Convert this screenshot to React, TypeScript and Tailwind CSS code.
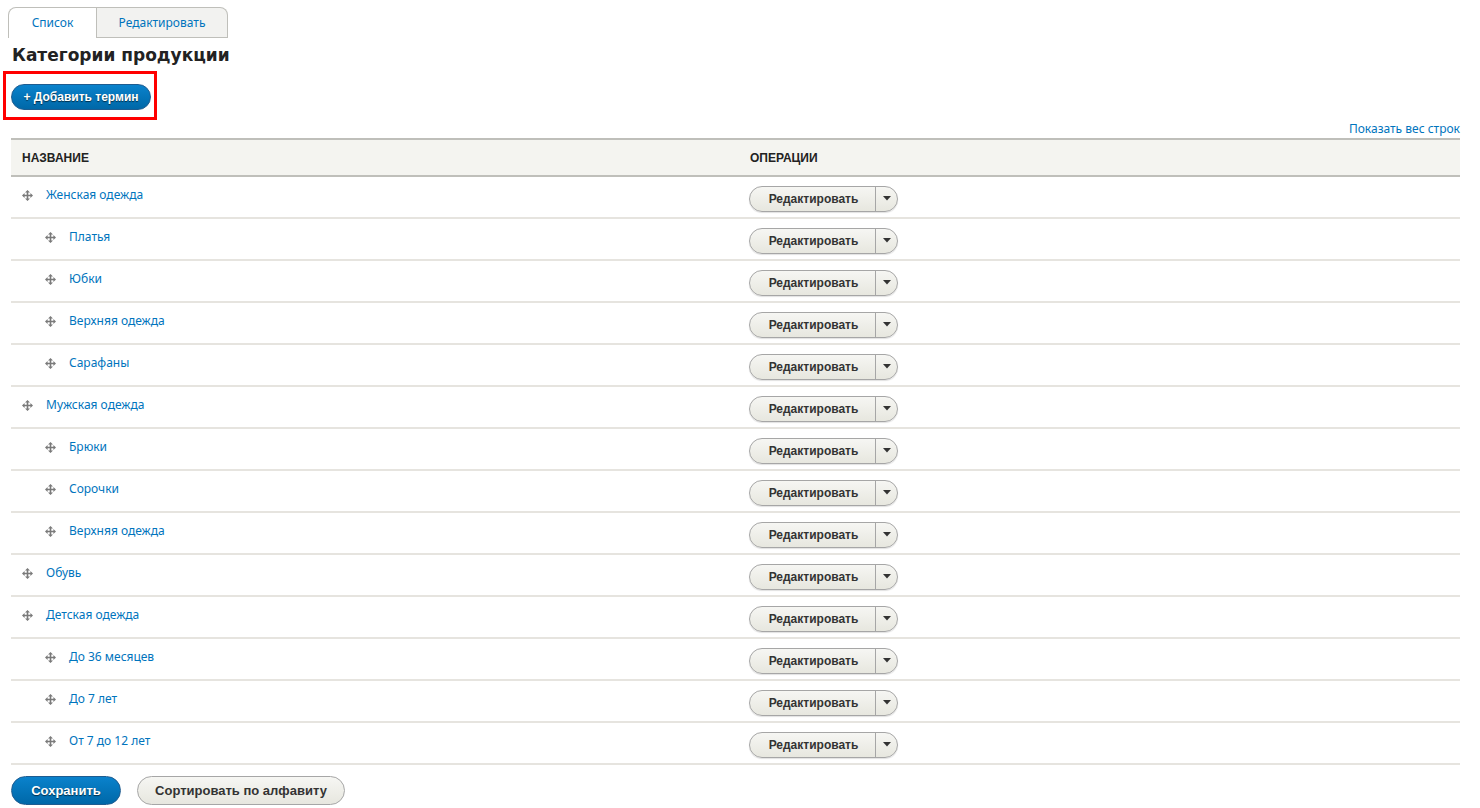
import React from "react";

const rows: { name: string; level: number }[] = [
  { name: "Женская одежда", level: 0 },
  { name: "Платья", level: 1 },
  { name: "Юбки", level: 1 },
  { name: "Верхняя одежда", level: 1 },
  { name: "Сарафаны", level: 1 },
  { name: "Мужская одежда", level: 0 },
  { name: "Брюки", level: 1 },
  { name: "Сорочки", level: 1 },
  { name: "Верхняя одежда", level: 1 },
  { name: "Обувь", level: 0 },
  { name: "Детская одежда", level: 0 },
  { name: "До 36 месяцев", level: 1 },
  { name: "До 7 лет", level: 1 },
  { name: "От 7 до 12 лет", level: 1 },
];

function DragIcon() {
  return (
    <svg width="11" height="11" viewBox="0 0 11 11" className="shrink-0">
      <path d="M5.5 0 L8 2.6 H6.3 V4.7 H8.4 V3 L11 5.5 L8.4 8 V6.3 H6.3 V8.4 H8 L5.5 11 L3 8.4 H4.7 V6.3 H2.6 V8 L0 5.5 L2.6 3 V4.7 H4.7 V2.6 H3 Z" fill="#7a7a7a" />
    </svg>
  );
}

function DropButton() {
  return (
    <div className="flex h-[26px] w-[149px] items-stretch rounded-full border border-[#a6a6a6] bg-gradient-to-b from-[#f6f6f3] to-[#e7e7df] shadow-[0_1px_1px_rgba(0,0,0,0.12)]">
      <div className="flex w-[125px] items-center justify-center pl-[2px] text-[12px] font-bold text-[#333]" style={{ fontFamily: '"Liberation Sans", Arial, sans-serif' }}>
        Редактировать
      </div>
      <div className="flex flex-1 items-center justify-center border-l border-[#a6a6a6]">
        <svg width="8" height="5" viewBox="0 0 8 5"><path d="M0 0 H8 L4 4.5 Z" fill="#333" /></svg>
      </div>
    </div>
  );
}

export default function App() {
  const noto = { fontFamily: '"Noto Sans", "DejaVu Sans", sans-serif' };
  const arial = { fontFamily: '"Liberation Sans", Arial, sans-serif' };
  return (
    <div className="min-h-[808px] w-[1480px] bg-white text-[#333]" style={noto}>
      {/* Tabs */}
      <div className="flex pl-[8px] pt-[7px]">
        <div className="flex h-[31px] w-[89px] items-center justify-center rounded-tl-[8px] border border-b-0 border-[#bfbfba] bg-white text-[12px] text-[#0074bd]">
          Список
        </div>
        <div className="flex h-[31px] w-[131px] items-center justify-center rounded-tr-[8px] border border-l-0 border-[#bfbfba] bg-[#f2f2f0] text-[12px] text-[#0074bd]">
          Редактировать
        </div>
      </div>

      <h1
        className="pl-[12px] pt-[6px] text-[17px] font-bold leading-[22px] text-[#222]"
        style={{ fontFamily: '"DejaVu Sans", Verdana, sans-serif' }}
      >
        Категории продукции
      </h1>

      <div className="ml-[3px] mt-[5px] inline-block border-[3px] border-[#ff0000] pb-[7px] pl-[5px] pr-[3px] pt-[10px]">
        <div
          className="flex h-[26px] w-[140px] items-center justify-center rounded-full border border-[#1e5c90] bg-gradient-to-b from-[#0a82cc] to-[#0068a8] text-[12px] font-bold text-white [text-shadow:0_1px_1px_rgba(0,0,0,0.6)]"
          style={arial}
        >
          + Добавить термин
        </div>
      </div>

      <div className="pl-[11px] pr-[20px]">
        <div className="flex h-[18px] items-center justify-end text-[12px] text-[#0074bd]">Показать вес строк</div>

        {/* Table */}
        <div className="border-t-2 border-[#bfbfba]">
          <div className="flex h-[37px] items-center border-b-2 border-[#bfbfba] bg-[#f4f4f0] text-[12px] font-bold text-[#222]" style={arial}>
            <div className="w-[728px] pl-[11px]">НАЗВАНИЕ</div>
            <div className="pl-[11px]">ОПЕРАЦИИ</div>
          </div>
          {rows.map((r, i) => (
            <div key={i} className="flex h-[42px] items-stretch border-b-2 border-[#e6e4df]">
              <div
                className="flex w-[728px] items-center pb-[4px] text-[12px] text-[#0074bd]"
                style={{ paddingLeft: 11 + r.level * 23 }}
              >
                <DragIcon />
                <span className="ml-[13px]">{r.name}</span>
              </div>
              <div className="flex items-center pl-[10px] pt-[3px]">
                <DropButton />
              </div>
            </div>
          ))}
        </div>

        {/* Bottom buttons */}
        <div className="flex gap-[16px] pt-[11px]" style={arial}>
          <div className="flex h-[29px] w-[110px] items-center justify-center rounded-full border border-[#1e5c90] bg-gradient-to-b from-[#0a82cc] to-[#0068a8] text-[13px] font-bold text-white [text-shadow:0_1px_1px_rgba(0,0,0,0.6)]">
            Сохранить
          </div>
          <div className="flex h-[29px] w-[208px] items-center justify-center rounded-full border border-[#a6a6a6] bg-gradient-to-b from-[#f6f6f3] to-[#e7e7df] text-[13px] font-bold text-[#333]">
            Сортировать по алфавиту
          </div>
        </div>
      </div>
    </div>
  );
}
